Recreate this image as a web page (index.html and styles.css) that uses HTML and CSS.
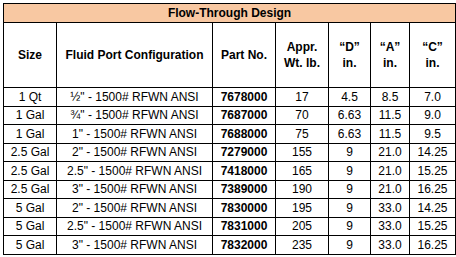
FILE: index.html
```html
<!DOCTYPE html>
<html>
<head>
<meta charset="utf-8">
<link rel="stylesheet" href="styles.css">
</head>
<body>
<table class="spec">
  <colgroup>
    <col class="c-size"><col class="c-port"><col class="c-part"><col class="c-wt"><col class="c-d"><col class="c-a"><col class="c-c">
  </colgroup>
  <thead>
    <tr class="title-row"><th colspan="7">Flow-Through Design</th></tr>
    <tr class="head-row">
      <th>Size</th>
      <th>Fluid Port Configuration</th>
      <th>Part No.</th>
      <th>Appr.<br>Wt. lb.</th>
      <th>“D”<br>in.</th>
      <th>“A”<br>in.</th>
      <th>“C”<br>in.</th>
    </tr>
  </thead>
  <tbody>
    <tr><td>1 Qt</td><td>½" - 1500# RFWN ANSI</td><td class="pn">7678000</td><td>17</td><td>4.5</td><td>8.5</td><td>7.0</td></tr>
    <tr><td>1 Gal</td><td>¾" - 1500# RFWN ANSI</td><td class="pn">7687000</td><td>70</td><td>6.63</td><td>11.5</td><td>9.0</td></tr>
    <tr><td>1 Gal</td><td>1" - 1500# RFWN ANSI</td><td class="pn">7688000</td><td>75</td><td>6.63</td><td>11.5</td><td>9.5</td></tr>
    <tr><td>2.5 Gal</td><td>2" - 1500# RFWN ANSI</td><td class="pn">7279000</td><td>155</td><td>9</td><td>21.0</td><td>14.25</td></tr>
    <tr><td>2.5 Gal</td><td>2.5" - 1500# RFWN ANSI</td><td class="pn">7418000</td><td>165</td><td>9</td><td>21.0</td><td>15.25</td></tr>
    <tr><td>2.5 Gal</td><td>3" - 1500# RFWN ANSI</td><td class="pn">7389000</td><td>190</td><td>9</td><td>21.0</td><td>16.25</td></tr>
    <tr><td>5 Gal</td><td>2" - 1500# RFWN ANSI</td><td class="pn">7830000</td><td>195</td><td>9</td><td>33.0</td><td>14.25</td></tr>
    <tr><td>5 Gal</td><td>2.5" - 1500# RFWN ANSI</td><td class="pn">7831000</td><td>205</td><td>9</td><td>33.0</td><td>15.25</td></tr>
    <tr><td>5 Gal</td><td>3" - 1500# RFWN ANSI</td><td class="pn">7832000</td><td>235</td><td>9</td><td>33.0</td><td>16.25</td></tr>
  </tbody>
</table>
</body>
</html>
```
FILE: styles.css
```css
html, body {
  margin: 0;
  padding: 0;
  background: #ffffff;
}
body {
  padding: 3px;
  font-family: "Liberation Sans", Arial, sans-serif;
  font-size: 12px;
  color: #000;
}
.spec {
  border-collapse: collapse;
  table-layout: fixed;
  width: 452px;
  border: 1px solid #000;
}
.c-size { width: 53px; }
.c-port { width: 156px; }
.c-part { width: 63px; }
.c-wt { width: 53px; }
.c-d { width: 42px; }
.c-a { width: 39px; }
.c-c { width: 46px; }
.spec th, .spec td {
  border: 1px solid #000;
  padding: 0;
  text-align: center;
  vertical-align: middle;
  line-height: 14px;
  white-space: nowrap;
}
.title-row th {
  background: #f8c8a2;
  height: 18px;
}
.head-row th {
  height: 64px;
  line-height: 16px;
}
.spec tbody td {
  height: 17.5px;
  font-weight: normal;
}
.spec tbody td.pn {
  font-weight: bold;
}
```
